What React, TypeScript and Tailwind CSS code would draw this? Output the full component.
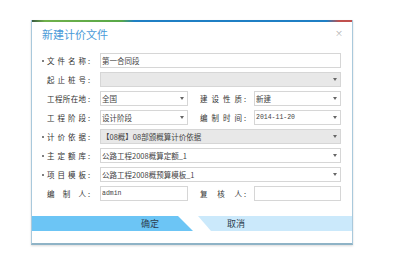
import React from "react";

const cjk = "font-['Noto_Sans_CJK_SC',sans-serif]";

function Label({ chars, req, right }: { chars: string; req?: boolean; right?: boolean }) {
  return (
    <div className={`flex h-full items-center text-[7.5px] leading-[11px] text-[#333] ${right ? "w-[55px] pl-[1px]" : "w-[58px]"}`}>
      {!right && (
        <span className="flex w-[5px] items-center">
          {req && <span className="h-[2px] w-[2px] rounded-full bg-[#555]" />}
        </span>
      )}
      <span className={`flex justify-between ${right ? "w-[42px]" : "w-[39px]"}`}>
        {chars.split("").map((c, i) => (
          <span key={i}>{c}</span>
        ))}
      </span>
      <span className="ml-[2px]">:</span>
    </div>
  );
}

function Field({
  value,
  gray,
  arrow,
  mono,
  className = "",
}: {
  value?: string;
  gray?: boolean;
  arrow?: boolean;
  mono?: boolean;
  className?: string;
}) {
  return (
    <div
      className={`flex h-full items-center border border-[#d6d6d6] pl-[1px] pr-[3px] ${
        gray ? "bg-[#e8e8e8]" : "bg-white"
      } ${className}`}
    >
      <span
        className={`min-w-0 flex-1 overflow-hidden whitespace-nowrap leading-[12px] text-[#444] ${
          mono ? "font-['Liberation_Mono',monospace] text-[6.5px]" : "text-[7.5px]"
        }`}
      >
        {value}
      </span>
      {arrow && (
        <svg width="4" height="3" viewBox="0 0 4 3" className="shrink-0">
          <path d="M0 0h4L2 3z" fill="#666" />
        </svg>
      )}
    </div>
  );
}

export default function App() {
  return (
    <div className={`h-[254px] w-[399px] bg-white pl-[31px] pt-[20px] ${cjk}`}>
      <div className="flex h-[225px] w-[322px] flex-col border-x border-b-2 border-x-[#a9c9dc] border-b-[#8fb3c6] bg-white shadow-[0_1px_2px_rgba(0,0,0,0.15)]">
        {/* top colour strip */}
        <div className="h-[2px] bg-[linear-gradient(90deg,#3a5a40_0%,#6fb04a_4%,#58a848_28%,#1f7fc4_32%,#1f7fc4_92%,#c0504d_96%,#c0504d_100%)]" />

        {/* header */}
        <div className="flex items-start justify-between pl-[10px] pr-[9px] pt-[6px]">
          <span className="text-[11px] leading-[13px] text-[#4b9ad8]">新建计价文件</span>
          <span className="mt-[1px] text-[8px] leading-none text-[#aaa]">×</span>
        </div>

        {/* form */}
        <div className="mt-[12px] flex flex-col gap-[4px] pl-[10px] pr-[11px]">
          <div className="flex h-[15px]">
            <Label chars="文件名称" req />
            <Field value="第一合同段" className="flex-1" />
          </div>
          <div className="flex h-[15px]">
            <Label chars="起止桩号" />
            <Field gray arrow className="flex-1" />
          </div>
          <div className="flex h-[15px]">
            <Label chars="工程所在地" />
            <Field value="全国" arrow className="w-[88px]" />
            <div className="w-[11px]" />
            <Label chars="建设性质" right />
            <Field value="新建" arrow className="flex-1" />
          </div>
          <div className="flex h-[15px]">
            <Label chars="工程阶段" />
            <Field value="设计阶段" arrow className="w-[88px]" />
            <div className="w-[11px]" />
            <Label chars="编制时间" right />
            <Field value="2014-11-20" mono arrow className="flex-1" />
          </div>
          <div className="flex h-[15px]">
            <Label chars="计价依据" req />
            <Field value="【08概】08部颁概算计价依据" gray arrow className="flex-1" />
          </div>
          <div className="flex h-[15px]">
            <Label chars="主定额库" req />
            <Field value="公路工程2008概算定额_1" arrow className="flex-1" />
          </div>
          <div className="flex h-[15px]">
            <Label chars="项目模板" req />
            <Field value="公路工程2008概预算模板_1" arrow className="flex-1" />
          </div>
          <div className="flex h-[15px]">
            <Label chars="编制人" />
            <Field value="admin" mono className="w-[88px]" />
            <div className="w-[11px]" />
            <Label chars="复核人" right />
            <Field className="flex-1" />
          </div>
        </div>

        {/* buttons */}
        <div className="mt-[15px] flex h-[15px]">
          <button className="flex h-full w-[166px] items-center bg-[#6cc5f5] pl-[109px] text-[9px] leading-none text-[#2c3e50] [clip-path:polygon(0_0,146px_0,161px_100%,0_100%)]">
            确定
          </button>
          <button className="flex h-full flex-1 items-center bg-[#cbe9fb] pl-[29px] text-[9px] leading-none text-[#2c3e50] [clip-path:polygon(0_0,100%_0,100%_100%,13px_100%)]">
            取消
          </button>
        </div>
      </div>
    </div>
  );
}
